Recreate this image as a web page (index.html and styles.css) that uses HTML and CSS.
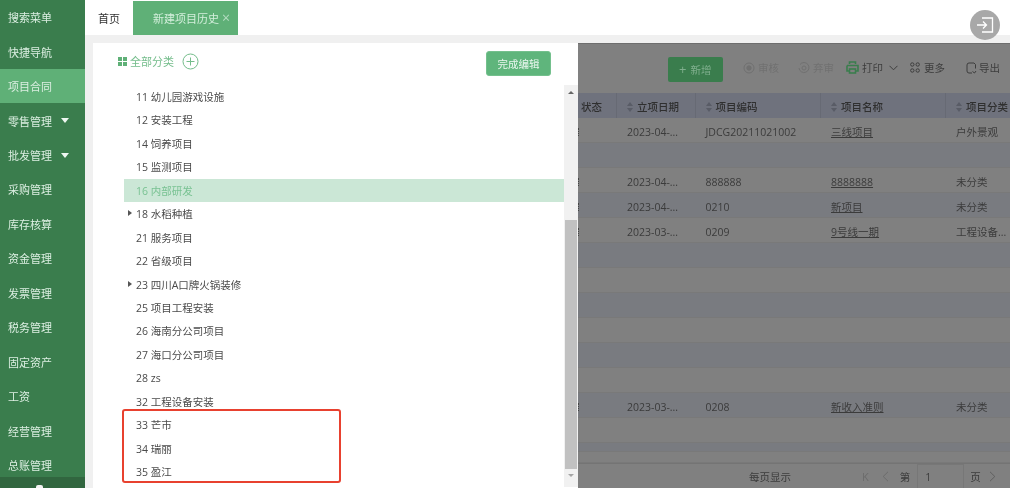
FILE: index.html
```html
<!DOCTYPE html>
<html lang="zh-CN">
<head>
    <meta charset="UTF-8">
    <meta name="viewport" content="width=device-width, initial-scale=1.0">
    <title>新建项目历史</title>
    <link rel="stylesheet" href="styles.css">
</head>
<body>
    <div class="app">
        <nav class="sidebar">
            <a class="nav-item">搜索菜单</a>
            <a class="nav-item">快捷导航</a>
            <a class="nav-item active">项目合同</a>
            <a class="nav-item">零售管理<i class="nav-caret"></i></a>
            <a class="nav-item">批发管理<i class="nav-caret"></i></a>
            <a class="nav-item">采购管理</a>
            <a class="nav-item">库存核算</a>
            <a class="nav-item">资金管理</a>
            <a class="nav-item">发票管理</a>
            <a class="nav-item">税务管理</a>
            <a class="nav-item">固定资产</a>
            <a class="nav-item">工资</a>
            <a class="nav-item">经营管理</a>
            <a class="nav-item">总账管理</a>
            <div class="nav-bottom"><i></i></div>
        </nav>

        <div class="main">
            <div class="tabs">
                <span class="tab-home">首页</span>
                <span class="tab-current">新建项目历史<span class="tab-close">×</span></span>
            </div>

            <div class="content">
                <!-- 分类面板 -->
                <section class="panel">
                    <div class="panel-head">
                        <svg class="grid-icon" width="9" height="9" viewBox="0 0 9 9"><rect width="4" height="4"/><rect x="5" width="4" height="4"/><rect y="5" width="4" height="4"/><rect x="5" y="5" width="4" height="4"/></svg>
                        <span class="panel-title">全部分类</span>
                        <svg class="add-icon" width="17" height="17" viewBox="0 0 17 17"><circle cx="8.5" cy="8.5" r="7.5"/><path d="M8.5 4.5v8M4.5 8.5h8"/></svg>
                        <button class="done-btn">完成编辑</button>
                    </div>
                    <div class="panel-body">
                        <ul class="tree">
                            <li>11 幼儿园游戏设施</li>
                            <li>12 安装工程</li>
                            <li>14 饲养项目</li>
                            <li>15 监测项目</li>
                            <li class="selected">16 内部研发</li>
                            <li class="has-child">18 水稻种植</li>
                            <li>21 服务项目</li>
                            <li>22 省级项目</li>
                            <li class="has-child">23 四川A口牌火锅装修</li>
                            <li>25 项目工程安装</li>
                            <li>26 海南分公司项目</li>
                            <li>27 海口分公司项目</li>
                            <li>28 zs</li>
                            <li>32 工程设备安装</li>
                            <li>33 芒市</li>
                            <li>34 瑞丽</li>
                            <li>35 盈江</li>
                        </ul>
                        <div class="scrollbar">
                            <i class="arrow-up"></i>
                            <div class="thumb"></div>
                            <i class="arrow-down"></i>
                        </div>
                    </div>
                    <div class="mark-box"></div>
                </section>

                <!-- 遮罩下的列表 -->
                <section class="list">
                    <div class="toolbar">
                        <button class="add-btn"><span class="add-plus">+</span>新增</button>
                        <span class="tool off check-tool"><svg width="12" height="12" viewBox="0 0 12 12"><circle cx="6" cy="6" r="5"/><circle cx="6" cy="6" r="2.2" class="fill"/></svg>审核</span>
                        <span class="tool off"><svg width="12" height="12" viewBox="0 0 12 12"><path d="M2 2.5A5 5 0 1 1 1 6"/><circle cx="6" cy="6" r="2"/></svg>弃审</span>
                        <span class="tool print-tool"><svg class="print-icon" width="13" height="13" viewBox="0 0 13 13"><path d="M3.500 3V1h6v2M1 4.500h11V10H9.500M3.500 10H1V4.500"/><rect x="3.500" y="8" width="6" height="4"/></svg>打印<svg class="chev" width="9" height="6" viewBox="0 0 9 6"><path d="M.5.800l4 4 4-4"/></svg></span>
                        <span class="tool more-tool"><svg width="10" height="11" viewBox="0 0 10 11"><circle cx="2.300" cy="2.500" r="1.700"/><circle cx="7.700" cy="2.500" r="1.700"/><circle cx="2.300" cy="8.500" r="1.700"/><circle cx="7.700" cy="8.500" r="1.700"/></svg>更多</span>
                        <span class="tool export-tool"><svg width="11" height="12" viewBox="0 0 11 12"><path d="M9.500 6.500V2.500L8 1H3Q1 1 1 3v6q0 2 2 2h3M6.500 9.500l2 1.500 1.500-2"/></svg>导出</span>
                    </div>

                    <div class="table">
                        <div class="row head">
                            <div class="cell col-a">状态</div>
                            <div class="cell col-b"><i class="sort"></i>立项日期</div>
                            <div class="cell col-c"><i class="sort"></i>项目编码</div>
                            <div class="cell col-d"><i class="sort"></i>项目名称</div>
                            <div class="cell col-e"><i class="sort"></i>项目分类</div>
                        </div>
                        <div class="row"><div class="cell col-a cut"></div><div class="cell col-b">2023-04-...</div><div class="cell col-c">JDCG20211021002</div><div class="cell col-d"><u>三线项目</u></div><div class="cell col-e">户外景观</div></div>
                        <div class="row"></div>
                        <div class="row"><div class="cell col-a cut"></div><div class="cell col-b">2023-04-...</div><div class="cell col-c">888888</div><div class="cell col-d"><u>8888888</u></div><div class="cell col-e">未分类</div></div>
                        <div class="row"><div class="cell col-a cut"></div><div class="cell col-b">2023-04-...</div><div class="cell col-c">0210</div><div class="cell col-d"><u>新项目</u></div><div class="cell col-e">未分类</div></div>
                        <div class="row"><div class="cell col-a cut"></div><div class="cell col-b">2023-03-...</div><div class="cell col-c">0209</div><div class="cell col-d"><u>9号线一期</u></div><div class="cell col-e">工程设备...</div></div>
                        <div class="row"></div>
                        <div class="row"></div>
                        <div class="row"></div>
                        <div class="row"></div>
                        <div class="row"></div>
                        <div class="row"></div>
                        <div class="row"><div class="cell col-a cut"></div><div class="cell col-b">2023-03-...</div><div class="cell col-c">0208</div><div class="cell col-d"><u>新收入准则</u></div><div class="cell col-e">未分类</div></div>
                        <div class="row"></div>
                        <div class="row thin"></div>
                        <div class="row rest"></div>
                    </div>

                    <div class="pager">
                        <span class="page-size">每页显示</span>
                        <span class="page-btn first">K</span>
                        <svg class="page-arrow prev" width="7" height="11" viewBox="0 0 7 11"><path d="M6 .8L1.200 5.500 6 10.200"/></svg>
                        <span class="page-word">第</span>
                        <span class="page-input">1</span>
                        <span class="page-word">页</span>
                        <svg class="page-arrow next" width="7" height="11" viewBox="0 0 7 11"><path d="M1 .8l4.800 4.700L1 10.200"/></svg>
                    </div>
                </section>
            </div>
        </div>

        <button class="float-btn">
            <svg width="18" height="16" viewBox="0 0 18 16"><path d="M6 1h10.500v14H6M1 8h9M7 4.500L10.500 8 7 11.500"/></svg>
        </button>
    </div>
</body>
</html>
```

FILE: styles.css
```css
* {
    box-sizing: border-box;
}
html, body {
    margin: 0;
    height: 100%;
    overflow: hidden;
}
body {
    font-family: "Open Sans", "Noto Sans CJK SC", sans-serif;
    font-size: 10.5px;
    color: #444;
    background: #fff;
}
.app {
    position: relative;
    display: flex;
    height: 488px;
    overflow: hidden;
    filter: blur(0.6px);
}

/* 左侧菜单 */
.sidebar {
    position: relative;
    flex: 0 0 85px;
    background: #3a7d4d;
    overflow: hidden;
}
.nav-item {
    display: flex;
    align-items: center;
    height: 34.46px;
    padding-left: 8px;
    font-size: 11px;
    color: #dcefe2;
}
.nav-item.active {
    background: #5fb077;
}
.nav-caret {
    margin-left: 9px;
    border-left: 4px solid transparent;
    border-right: 4px solid transparent;
    border-top: 5px solid #eef7f1;
}
.nav-bottom {
    position: absolute;
    left: 0;
    right: 0;
    bottom: 0;
    height: 11px;
    background: #31663f;
}
.nav-bottom i {
    position: absolute;
    left: 36px;
    bottom: 0;
    width: 7px;
    height: 3px;
    background: #f3f3f3;
    border-radius: 2px 2px 0 0;
}

.main {
    flex: 1;
    display: flex;
    flex-direction: column;
    min-width: 0;
    background: #f0f0f0;
}

/* 页签 */
.tabs {
    display: flex;
    align-items: stretch;
    flex: 0 0 35px;
    background: #fff;
}
.tab-home {
    display: flex;
    align-items: center;
    padding: 0 13px;
    font-size: 11px;
    color: #333;
}
.tab-current {
    display: flex;
    align-items: center;
    margin-top: 1px;
    width: 105px;
    padding-left: 20px;
    font-size: 11px;
    color: #d4efdc;
    background: #5fb077;
}
.tab-close {
    margin-left: 3px;
    font-size: 14px;
    line-height: 1;
    color: #b5dcc2;
}

.content {
    flex: 1;
    display: flex;
    min-height: 0;
    padding: 8px 0 0 8px;
}

/* 分类面板 */
.panel {
    position: relative;
    flex: 0 0 485px;
    display: flex;
    flex-direction: column;
    background: #fff;
}
.panel-head {
    display: flex;
    align-items: center;
    flex: 0 0 42px;
    padding: 0 27px 6px 25px;
    color: #74bd8b;
    font-size: 11px;
}
.grid-icon {
    fill: #5fb077;
    margin-right: 3px;
}
.add-icon {
    margin-left: 8px;
    fill: none;
    stroke: #74bd8b;
    stroke-width: 1;
}
.done-btn {
    margin: 4px 0 0 auto;
    width: 65px;
    height: 25px;
    padding: 0;
    border: 1px solid #74c08d;
    border-radius: 3px;
    background: #5fb57c;
    color: #eaf7ef;
    font: inherit;
    font-size: 10.5px;
}
.panel-body {
    flex: 1;
    display: flex;
    min-height: 0;
}
.tree {
    flex: 1;
    margin: 0;
    padding: 0 0 0 31px;
    list-style: none;
}
.tree li {
    position: relative;
    height: 23.44px;
    padding: 1px 0 0 12px;
    line-height: 23.44px;
    color: #4a4a4a;
}
.tree li.selected {
    background: #cbe7d6;
    color: #78c292;
}
.tree li.has-child::before {
    content: "";
    position: absolute;
    left: 4px;
    top: 8px;
    border-top: 3.5px solid transparent;
    border-bottom: 3.5px solid transparent;
    border-left: 4.5px solid #555;
}
.scrollbar {
    flex: 0 0 14px;
    display: flex;
    flex-direction: column;
    align-items: center;
    margin-bottom: 1px;
    background: #f1f1f1;
}
.arrow-up, .arrow-down {
    flex: none;
    border-left: 3px solid transparent;
    border-right: 3px solid transparent;
}
.arrow-up {
    margin-top: 6px;
    border-bottom: 3px solid #666;
}
.arrow-down {
    margin-top: 5px;
    border-top: 3px solid #a5a5a5;
}
.thumb {
    width: 12px;
    height: 249px;
    margin-top: 126px;
    background: #c1c1c1;
}
.mark-box {
    position: absolute;
    left: 29px;
    top: 366px;
    width: 219px;
    height: 74px;
    border: 2px solid #e8412f;
    border-radius: 3px;
}

/* 遮罩下的列表 */
.list {
    flex: 1;
    min-width: 0;
    display: flex;
    flex-direction: column;
    background: #808080;
    color: #3b3b3b;
    border-top: 1px solid #6e6e6e;
}
.toolbar {
    flex: 0 0 49px;
    display: flex;
    align-items: center;
    padding: 0 0 2px 90px;
    color: #3d3d3d;
}
.add-btn {
    display: flex;
    align-items: center;
    width: 55px;
    height: 25px;
    margin-top: 3px;
    padding: 0 0 0 11px;
    border: 0;
    border-radius: 2px;
    background: #3a7d4d;
    color: #7fae8d;
    font: inherit;
    font-size: 10.5px;
}
.add-plus {
    margin-right: 4px;
    font-size: 13px;
    line-height: 1;
}
.tool {
    display: flex;
    align-items: center;
    gap: 3px;
    fill: none;
    stroke: currentColor;
    stroke-width: 1;
}
.tool svg {
    flex: none;
}
.tool.off {
    color: #707070;
    margin-left: 20px;
}
.tool .fill {
    fill: currentColor;
}
.check-tool {
    margin-right: -1px;
}
.print-tool {
    margin-left: 12px;
}
.print-icon {
    stroke: #3a7d4d;
    stroke-width: 1.6;
}
.chev {
    margin-left: 3px;
}
.more-tool {
    margin-left: 12px;
    gap: 4px;
}
.export-tool {
    margin-left: 21px;
    gap: 2px;
}

.table {
    flex: 1;
    min-height: 0;
    overflow: hidden;
}
.row {
    display: flex;
    height: 25px;
    background: #808080;
    border-bottom: 1px solid #797979;
}
.row:nth-child(odd) {
    background: #797b80;
}
.row.head {
    background: #6f727d;
    border-bottom: 0;
    font-weight: 500;
    color: #2f2f2f;
}
.row.thin {
    height: 9px;
}
.row.rest {
    height: 11px;
    background: #808080;
}
.cell {
    display: flex;
    align-items: center;
    padding-top: 3px;
    white-space: nowrap;
    overflow: hidden;
}
.head .cell {
    padding-top: 2px;
    border-right: 1px solid #676a74;
}
.head .col-e {
    border-right: 0;
}
.col-a {
    flex: 0 0 39px;
    padding-left: 3px;
}
.col-b {
    flex: 0 0 78.500px;
    padding-left: 10px;
}
.col-c {
    flex: 0 0 125.500px;
    padding-left: 10px;
}
.col-d {
    flex: 0 0 125px;
    padding-left: 10px;
}
.col-e {
    flex: 1;
    padding-left: 10px;
}
.cut::before {
    content: "";
    width: 1px;
    height: 8px;
    margin-left: -3px;
    border-left: 1px dotted #444;
}
.sort {
    position: relative;
    flex: none;
    width: 6px;
    height: 10px;
    margin-right: 4px;
}
.sort::before, .sort::after {
    content: "";
    position: absolute;
    left: 0;
    border-left: 3px solid transparent;
    border-right: 3px solid transparent;
}
.sort::before {
    top: 0;
    border-bottom: 4px solid #595c66;
}
.sort::after {
    bottom: 0;
    border-top: 4px solid #595c66;
}

.pager {
    flex: 0 0 25px;
    display: flex;
    align-items: center;
    padding-left: 171px;
    border-top: 1px solid #747474;
    color: #3b3b3b;
}
.page-btn.first {
    margin-left: 71px;
    font-size: 11px;
    color: #6b6b6b;
}
.page-arrow {
    fill: none;
    stroke-width: 1;
    stroke: #5f5f5f;
}
.page-arrow.prev {
    margin: 0 11px 0 13px;
    stroke: #6b6b6b;
}
.page-arrow.next {
    margin-left: 8px;
}
.page-input {
    display: flex;
    align-items: center;
    width: 47px;
    height: 24px;
    margin: 0 6px 0 7px;
    padding-left: 7px;
    border-left: 1px solid #777;
    border-right: 1px solid #777;
    border-top: 1px solid #777;
}

/* 右上角悬浮按钮 */
.float-btn {
    position: absolute;
    left: 970px;
    top: 10px;
    display: flex;
    align-items: center;
    justify-content: center;
    width: 30px;
    height: 30px;
    padding: 0;
    border: 0;
    border-radius: 50%;
    background: #a8a8a8;
}
.float-btn svg {
    fill: none;
    stroke: #fff;
    stroke-width: 1.300;
}
```
